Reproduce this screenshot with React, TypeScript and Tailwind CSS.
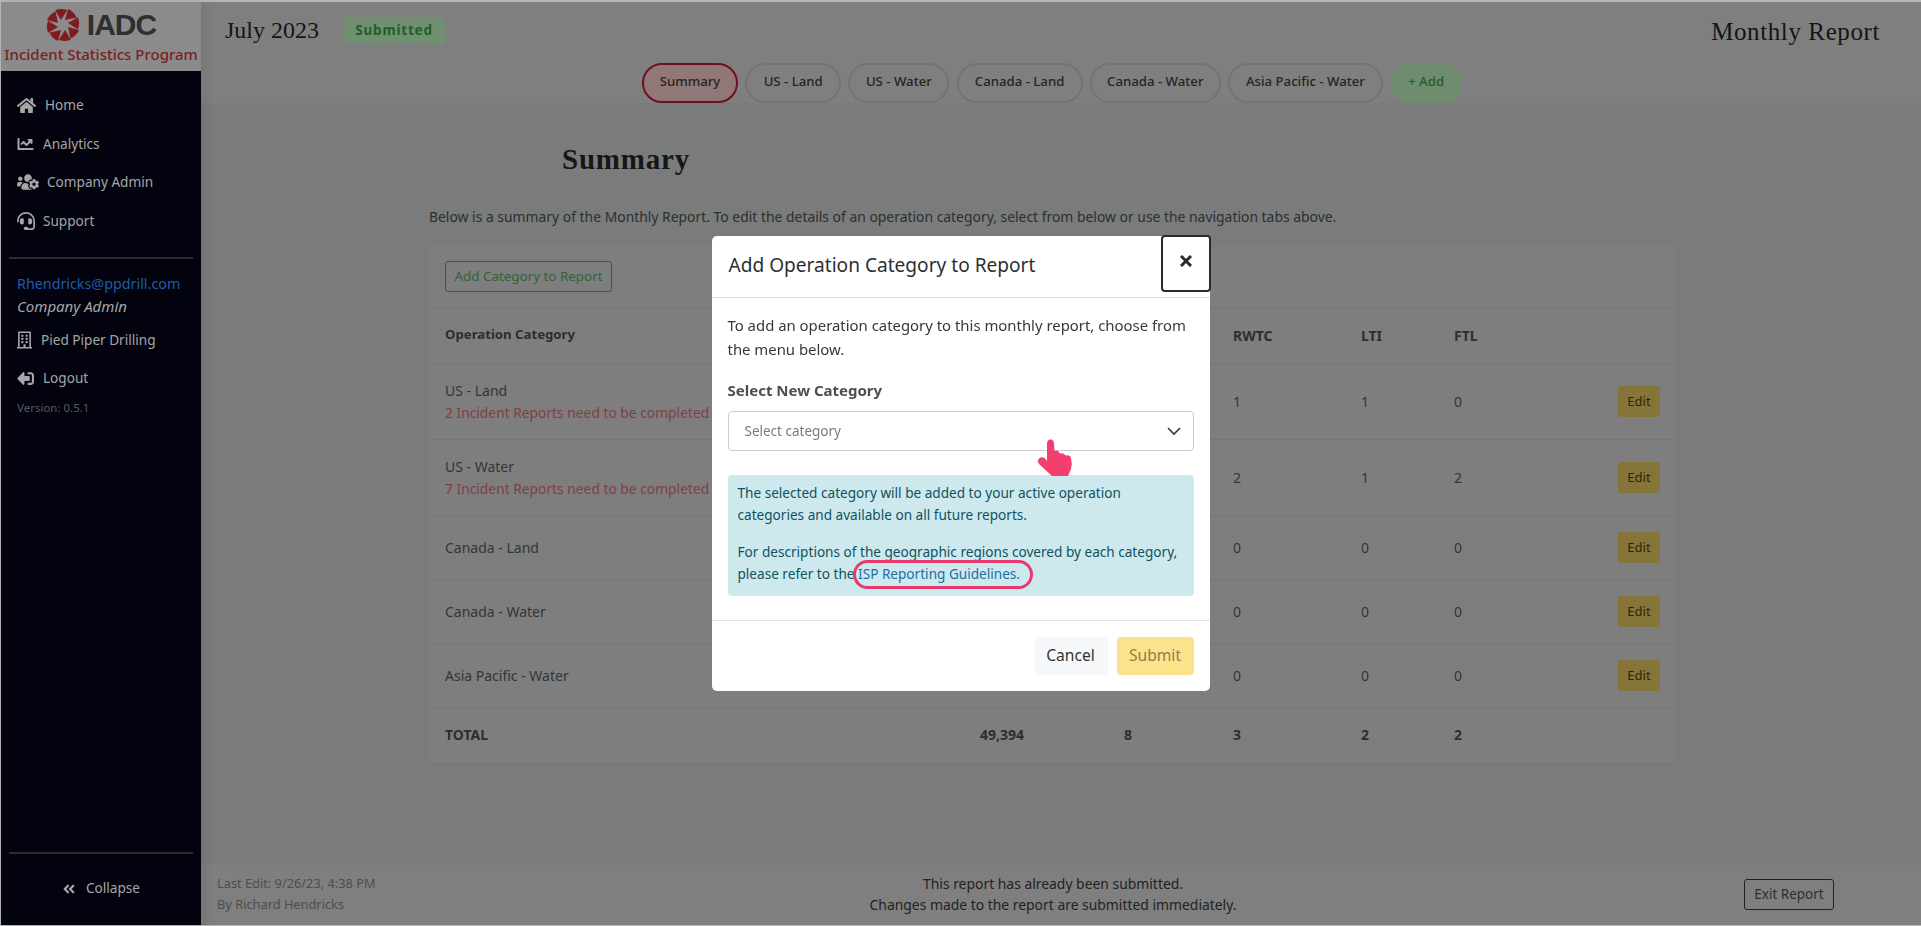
import React from 'react';
import {
  FaHome,
  FaChartLine,
  FaUsersCog,
  FaHeadset,
  FaRegBuilding,
  FaSignOutAlt,
  FaAngleDoubleLeft,
} from 'react-icons/fa';

const SANS = 'font-["Noto_Sans","Open_Sans",sans-serif]';
const SERIF = 'font-["Liberation_Serif",serif]';

const tabs = [
  { label: 'Summary', w: 'w-[96px]', active: true },
  { label: 'US - Land', w: 'w-[96px]' },
  { label: 'US - Water', w: 'w-[101px]' },
  { label: 'Canada - Land', w: 'w-[126px]' },
  { label: 'Canada - Water', w: 'w-[131px]' },
  { label: 'Asia Pacific - Water', w: 'w-[155px]' },
];

const rows = [
  { name: 'US - Land', note: '2 Incident Reports need to be completed', vals: ['1', '1', '0'], h: 'h-[76px]' },
  { name: 'US - Water', note: '7 Incident Reports need to be completed', vals: ['2', '1', '2'], h: 'h-[76px]' },
  { name: 'Canada - Land', vals: ['0', '0', '0'], h: 'h-[64px]' },
  { name: 'Canada - Water', vals: ['0', '0', '0'], h: 'h-[64px]' },
  { name: 'Asia Pacific - Water', vals: ['0', '0', '0'], h: 'h-[64px]' },
];

const COLS = 'grid grid-cols-[535px_144px_109px_128px_93px_1fr_42px] items-center pl-4 pr-4';

const IadcMark = () => (
  <svg viewBox="-17 -17 34 34" className="w-[34px] h-[34px] shrink-0">
    {[0, 45, 90, 135, 180, 225, 270, 315].map((a) => (
      <path key={a} d="M2 -5 L5 -16 Q11 -13.5 13.5 -7.5 Z" fill="#7f1c1f" transform={`rotate(${a})`} />
    ))}
  </svg>
);

const Pointer = () => (
  <svg viewBox="0 0 100 70" className="absolute left-[308px] top-[122px] w-[100px] h-[70px]">
    <path
      d="M27 24 Q27 19.5 30.5 19.5 Q34 19.5 34 24 L34.5 31 Q38 29.5 40 33.5 Q43.5 32.5 45.5 35.5 Q50 34.5 51 38 Q52.5 44 51 49 L48 56 L32 56 L19.5 44.5 Q16.5 41 19 38.5 Q22 36 25 38.5 L27 41 Z"
      fill="#f23f6f"
    />
  </svg>
);

const Sidebar = () => (
  <aside className="w-[200px] shrink-0 flex flex-col bg-[#02030f] text-[#a6a6a6] text-[13.6px] z-10 shadow-[4px_0_10px_rgba(0,0,0,0.08)]">
    <div className="h-[69px] bg-[#8b8b8b] flex flex-col items-center pt-[6px]">
      <div className="flex items-center gap-[7px] h-[34px]">
        <IadcMark />
        <span className='font-["Liberation_Sans",sans-serif] font-bold text-[30px] leading-none text-[#2f2f2f] tracking-[-1px]'>IADC</span>
      </div>
      <div className="mt-[2px] text-[15px] leading-[20px] font-medium text-[#7a1f22] whitespace-nowrap">Incident Statistics Program</div>
    </div>
    <nav className="pl-4 pt-[20px] flex flex-col">
      <div className="flex items-center h-[28px] gap-[9px] mb-[11px]"><FaHome className="w-[19px] h-[17px]" /><span>Home</span></div>
      <div className="flex items-center h-[28px] gap-[9px] mb-[10px]"><FaChartLine className="w-[17px] h-[16px]" /><span>Analytics</span></div>
      <div className="flex items-center h-[28px] gap-[8px] mb-[11px]"><FaUsersCog className="w-[22px] h-[18px]" /><span>Company Admin</span></div>
      <div className="flex items-center h-[28px] gap-[8px]"><FaHeadset className="w-[18px] h-[18px]" /><span>Support</span></div>
    </nav>
    <div className="mx-2 mt-[22px] h-[2px] bg-[#2a2c35]" />
    <div className="pl-4 pt-[13px]">
      <div className="text-[#1d5da6] text-[14.3px] leading-[24px]">Rhendricks@ppdrill.com</div>
      <div className="italic text-[15px] leading-[24px] -mt-[2px]">Company Admin</div>
      <div className="flex items-center gap-[9px] h-[24px] mt-[10px]"><FaRegBuilding className="w-[15px] h-[18px]" /><span>Pied Piper Drilling</span></div>
      <div className="flex items-center gap-[9px] h-[24px] mt-[14px]"><FaSignOutAlt className="w-[17px] h-[17px] rotate-180" /><span>Logout</span></div>
      <div className="text-[11.5px] leading-[20px] text-[#5a5a5e] mt-[8px]">Version: 0.5.1</div>
    </div>
    <div className="mt-auto mx-2 h-[2px] bg-[#2a2c35]" />
    <div className="h-[71px] flex items-center justify-center gap-[10px] pb-[2px]">
      <FaAngleDoubleLeft className="w-[14px] h-[14px]" /><span>Collapse</span>
    </div>
  </aside>
);

const Header = () => (
  <header className="h-[101px] shrink-0 bg-[#7f7f7f] flex flex-col">
    <div className="flex items-center h-[58px] pl-[24px] pr-[41px] pb-[2px]">
      <h1 className={`${SERIF} text-[24px] text-[#151515]`}>July 2023</h1>
      <span className="ml-[24px] w-[102px] h-[27px] flex items-center justify-center rounded-[3px] bg-[#719071] text-[#1f5f28] text-[13.5px] font-bold tracking-[0.8px]">Submitted</span>
      <div className={`${SERIF} ml-auto mt-[3px] text-[25px] tracking-[0.6px] text-[#151515]`}>Monthly Report</div>
    </div>
    <div className="flex gap-[7.2px] pl-[441px] pt-[3px]">
      {tabs.map((t) => (
        <div
          key={t.label}
          className={`${t.w} h-[40px] rounded-[20px] border-2 flex items-center justify-center pb-[2px] text-[13.2px] font-medium whitespace-nowrap text-[#252525] ${
            t.active ? 'border-[#6e1220] bg-[#917777]' : 'border-[#747474]'
          }`}
        >
          {t.label}
        </div>
      ))}
      <div className="w-[72px] h-[40px] rounded-[20px] bg-[#6f8c6f] flex items-center justify-center pb-[2px] text-[13.2px] font-medium text-[#1f5f28]">+ Add</div>
    </div>
  </header>
);

const ReportTable = () => (
  <div className="w-[1247px] ml-[228px] mt-[18px] bg-[#7d7e7d] text-[14px] text-[#333636]">
    <div className="h-[64px] flex items-center pl-4 border-b border-[#737675]">
      <div className="w-[167px] h-[31px] flex items-center justify-center border border-[#2a6534] rounded-[3px] text-[#32643a] text-[13.4px] whitespace-nowrap">Add Category to Report</div>
    </div>
    <div className={`${COLS} h-[55px] font-bold text-[#2c2f2f] border-b border-[#737675] pb-[2px]`}>
      <div className="text-[13.2px]">Operation Category</div>
      <div />
      <div />
      <div>RWTC</div>
      <div>LTI</div>
      <div>FTL</div>
    </div>
    {rows.map((r) => (
      <div key={r.name} className={`${COLS} ${r.h} border-b border-[#737675]`}>
        <div className="leading-[22px]">
          <div>{r.name}</div>
          {r.note && <div className="text-[#823e42] text-[13.8px] whitespace-nowrap">{r.note}</div>}
        </div>
        <div />
        <div />
        {r.vals.map((v, i) => (
          <div key={i}>{v}</div>
        ))}
        <div className="col-start-7 w-[42px] h-[31px] rounded-[3px] bg-[#857538] text-[#2b2410] text-[13px] flex items-center justify-center">Edit</div>
      </div>
    ))}
    <div className={`${COLS} h-[56px] font-bold text-[#2c2f2f] border-b border-[#737675] pb-[3px]`}>
      <div>TOTAL</div>
      <div>49,394</div>
      <div>8</div>
      <div>3</div>
      <div>2</div>
      <div>2</div>
    </div>
  </div>
);

const Footer = () => (
  <footer className="h-[60px] shrink-0 bg-[#7f7f7f] flex items-center relative pl-[10px] pr-[87px] ml-[6px] pb-[2px]">
    <div className="w-[200px] text-[12.8px] leading-[21px] text-[#4e4e4e] whitespace-nowrap">
      <div>Last Edit: 9/26/23, 4:38 PM</div>
      <div>By Richard Hendricks</div>
    </div>
    <div className="ml-[452px] text-[13.9px] leading-[21px] text-[#222] text-center w-[368px]">
      <div>This report has already been submitted.</div>
      <div className="whitespace-nowrap">Changes made to the report are submitted immediately.</div>
    </div>
    <div className="ml-auto w-[90px] h-[31px] flex items-center justify-center border border-[#222] rounded-[3px] text-[13.5px] text-[#303030]">Exit Report</div>
  </footer>
);

const Modal = () => (
  <div className="fixed inset-0 z-20 flex items-center justify-center">
    <div className="relative w-[498px] h-[455px] bg-white rounded-[5px] flex flex-col text-[#333a3f]">
      <div className="h-[62px] flex items-center pl-[17px] border-b border-[#dee2e6]">
        <h2 className="text-[19.1px] text-[#2b2f33] pb-[1px]">Add Operation Category to Report</h2>
      </div>
      <button className="absolute -right-px -top-px w-[50px] h-[57px] border-2 border-[#2a2a2a] rounded-[4px] flex items-center justify-center pb-[5px] bg-white">
        <svg viewBox="0 0 12 12" className="w-[12px] h-[12px]"><path d="M1 1 L11 11 M11 1 L1 11" stroke="#2a2a2a" strokeWidth="3" /></svg>
      </button>
      <div className="px-4 flex-1 relative">
        <p className="text-[14.9px] leading-[24px] mt-[15px] whitespace-pre-line">{'To add an operation category to this monthly report, choose from\nthe menu below.'}</p>
        <label className="block text-[15px] font-bold mt-[17px] leading-[24px] text-[#4a4f53]">Select New Category</label>
        <div className="mt-[9px] h-[40px] border border-[#c9cdd1] rounded-[4px] flex items-center pl-4 pr-[11px] justify-between">
          <span className="text-[13.5px] text-[#767b80] pt-[1px]">Select category</span>
          <svg viewBox="0 0 16 16" className="w-[16px] h-[16px]"><path d="M2 5 L8 11 L14 5" fill="none" stroke="#343a40" strokeWidth="1.6" /></svg>
        </div>
        <div className="mt-[24px] h-[121px] bg-[#cee9ee] rounded-[4px] pl-[10px] pr-[8px] pt-[7px] text-[13.6px] leading-[22px] text-[#0f5261] relative">
          <p>The selected category will be added to your active operation categories and available on all future reports.</p>
          <p className="mt-[15px]">
            For descriptions of the geographic regions covered by each category, please refer to the <span className="text-[#1c6fa6]">ISP Reporting Guidelines.</span>
          </p>
          <div className="absolute left-[125px] top-[85px] w-[180px] h-[29px] border-[3.5px] border-[#e9386d] rounded-full" />
        </div>
        <Pointer />
      </div>
      <div className="h-[71px] border-t border-[#dee2e6] flex items-start justify-end gap-[9px] pr-4 pt-[16px] text-[15.6px]">
        <div className="w-[74px] h-[38px] rounded-[4px] bg-[#f7f8f9] text-[#2f3337] flex items-center justify-center">Cancel</div>
        <div className="w-[77px] h-[38px] rounded-[4px] bg-[#fde28c] text-[#8f7d45] flex items-center justify-center">Submit</div>
      </div>
    </div>
  </div>
);

export default function App() {
  return (
    <div className={`${SANS} h-[926px] w-[1921px] overflow-hidden bg-[#b3b7b7] pl-px pt-[2px] pb-px flex`}>
      <Sidebar />
      <main className="flex-1 flex flex-col min-w-0 bg-[#7c7e7e]">
        <Header />
        <div className="flex-1 bg-[#797c7b]">
          <h2 className={`${SERIF} ml-[361px] mt-[36px] text-[29px] leading-[40px] font-bold tracking-[0.8px] text-[#161616]`}>Summary</h2>
          <p className="ml-[228px] mt-[28px] text-[13.9px] leading-[20px] text-[#2c2f2f] whitespace-nowrap">Below is a summary of the Monthly Report. To edit the details of an operation category, select from below or use the navigation tabs above.</p>
          <ReportTable />
        </div>
        <Footer />
      </main>
      <Modal />
    </div>
  );
}
